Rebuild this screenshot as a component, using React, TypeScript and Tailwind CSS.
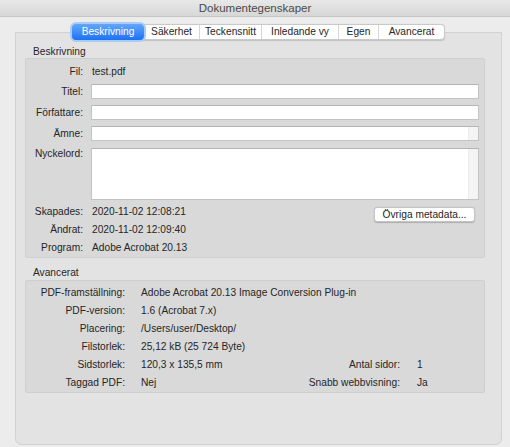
import React from "react";

const Field = ({ scroll = false, h = "h-[15px]" }: { scroll?: boolean; h?: string }) => (
  <div className={`flex-1 ${h} flex border border-[#c3c3c3] border-t-[#b5b5b5] bg-white`}>
    <div className="flex-1 bg-white" />
    {scroll && <div className="w-[10px] bg-[#f4f4f4] border-l border-[#ebebeb]" />}
  </div>
);

const TopRow = ({ label, children, className = "" }: { label: string; children?: React.ReactNode; className?: string }) => (
  <div className={`flex ${className}`}>
    <div className="w-[57px] text-right shrink-0 whitespace-nowrap">{label}</div>
    <div className="ml-[8px] flex-1 flex">{children}</div>
  </div>
);

const AdvRow = ({ l, v, rl, rv }: { l: string; v: string; rl?: string; rv?: string }) => (
  <div className="flex items-center h-[18px] whitespace-nowrap">
    <div className="w-[99px] text-right shrink-0">{l}</div>
    <div className="ml-[16px] w-[150px] shrink-0">{v}</div>
    <div className="w-[109px] text-right shrink-0">{rl ?? ""}</div>
    <div className="ml-[17px]">{rv ?? ""}</div>
  </div>
);

export default function App() {
  const tabs = [
    { t: "Säkerhet", w: "w-[55px]" },
    { t: "Teckensnitt", w: "w-[62px]" },
    { t: "Inledande vy", w: "w-[77px]" },
    { t: "Egen", w: "w-[40px]" },
    { t: "Avancerat", w: "w-[66px]" },
  ];
  return (
    <div className="w-[510px] h-[447px] bg-[#ececec] overflow-hidden font-['Liberation_Sans',Arial,sans-serif] text-[10.2px] leading-[12px] text-[#262626]">
      <div className="h-[17px] bg-gradient-to-b from-[#e8e8e8] to-[#d7d7d7] border-b border-[#c6c6c6] flex items-center justify-center text-[11.5px] text-[#4a4a4a]">
        Dokumentegenskaper
      </div>
      <div className="pl-[15px] pt-[7px]">
        <div className="relative z-10 w-[487px] flex justify-center h-[16px]">
          <div className="flex h-[16px] bg-white border border-[#c9c9c9] rounded-[4px] shadow-[0_0.5px_1px_rgba(0,0,0,0.15)]">
            <div className="w-[72px] -my-[1px] -ml-[1px] flex items-center justify-center rounded-[4px] bg-gradient-to-b from-[#62a6fb] to-[#1c70f4] text-white ring-2 ring-[#a9cbf7]">
              Beskrivning
            </div>
            {tabs.map((x, i) => (
              <div
                key={x.t}
                className={`${x.w} flex items-center justify-center ${i > 0 ? "border-l border-[#d6d6d6]" : ""}`}
              >
                {x.t}
              </div>
            ))}
          </div>
        </div>
        <div className="-mt-[8px] w-[487px] h-[413px] bg-[#e3e3e3] border border-[#d2d2d2] rounded-b-[6px] pt-[13px]">
          <div className="ml-[17px] h-[12px]">Beskrivning</div>
          <div className="ml-[9px] mr-[16px] h-[200px] bg-[#d9d9d9] border border-[#cfcfcf] rounded-[2px] pt-[5px] pr-[5px]">
            <TopRow label="Fil:" className="h-[16px] items-center">
              <span className="ml-[1px]">test.pdf</span>
            </TopRow>
            <TopRow label="Titel:" className="mt-[4px] items-center">
              <Field />
            </TopRow>
            <TopRow label="Författare:" className="mt-[6px] items-center">
              <Field />
            </TopRow>
            <TopRow label="Ämne:" className="mt-[6px] items-center">
              <Field scroll />
            </TopRow>
            <TopRow label="Nyckelord:" className="mt-[7px] items-start">
              <Field scroll h="h-[52px]" />
            </TopRow>
            <div className="mt-[3px] flex h-[18px] items-center">
              <div className="w-[57px] text-right shrink-0">Skapades:</div>
              <div className="ml-[9px]">2020-11-02 12:08:21</div>
              <div className="ml-auto mr-[4px] self-start mt-[4px] w-[101px] h-[15px] bg-white border border-[#c4c4c4] rounded-[3px] shadow-[0_0.5px_1px_rgba(0,0,0,0.2)] flex items-center justify-center whitespace-nowrap">
                Övriga metadata...
              </div>
            </div>
            <div className="flex h-[18px] items-center">
              <div className="w-[57px] text-right shrink-0">Ändrat:</div>
              <div className="ml-[9px]">2020-11-02 12:09:40</div>
            </div>
            <div className="flex h-[18px] items-center">
              <div className="w-[57px] text-right shrink-0">Program:</div>
              <div className="ml-[9px]">Adobe Acrobat 20.13</div>
            </div>
          </div>
          <div className="mt-[9px] ml-[17px] h-[12px]">Avancerat</div>
          <div className="mt-[1px] ml-[9px] mr-[16px] h-[113px] bg-[#d9d9d9] border border-[#cfcfcf] rounded-[2px] pt-[3px]">
            <AdvRow l="PDF-framställning:" v="Adobe Acrobat 20.13 Image Conversion Plug-in" />
            <AdvRow l="PDF-version:" v="1.6 (Acrobat 7.x)" />
            <AdvRow l="Placering:" v="/Users/user/Desktop/" />
            <AdvRow l="Filstorlek:" v="25,12 kB (25 724 Byte)" />
            <AdvRow l="Sidstorlek:" v="120,3 x 135,5 mm" rl="Antal sidor:" rv="1" />
            <AdvRow l="Taggad PDF:" v="Nej" rl="Snabb webbvisning:" rv="Ja" />
          </div>
        </div>
      </div>
    </div>
  );
}
